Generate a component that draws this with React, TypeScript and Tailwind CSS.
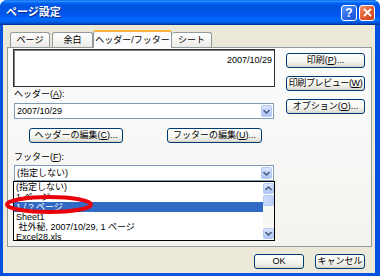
import React from 'react';

const font = "[font-family:'Liberation_Sans','Noto_Sans_CJK_JP',sans-serif]";

const Btn: React.FC<{ className?: string; children: React.ReactNode }> = ({ className = '', children }) => (
  <div
    className={`flex h-[15px] items-center justify-center rounded-[3px] border border-[#003c74] bg-[linear-gradient(180deg,#ffffff_0%,#f5f5f1_55%,#e6e5dd_85%,#d6d0c5_100%)] text-[9px] leading-none whitespace-nowrap text-black ${className}`}
  >
    {children}
  </div>
);

const Chevron: React.FC<{ up?: boolean }> = ({ up }) => (
  <svg width="7" height="5" viewBox="0 0 7 5">
    <polyline
      points={up ? '0.5,4 3.5,1 6.5,4' : '0.5,1 3.5,4 6.5,1'}
      fill="none"
      stroke="#4d6185"
      strokeWidth="1.6"
    />
  </svg>
);

const ArrowBtn: React.FC<{ up?: boolean; className?: string }> = ({ up, className = '' }) => (
  <div
    className={`flex w-[11px] items-center justify-center rounded-[2px] border border-[#b6c8f4] bg-[linear-gradient(180deg,#dbe5fc_0%,#c3d4fa_50%,#b1c6f5_100%)] ${className}`}
  >
    <Chevron up={up} />
  </div>
);

const Combo: React.FC<{ value: string }> = ({ value }) => (
  <div className="mx-px flex h-[16px] items-center border border-[#7f9db9] bg-white pl-[2px]">
    <span className="flex-1 text-[9px] leading-none whitespace-nowrap">{value}</span>
    <ArrowBtn className="mr-px h-[12px]" />
  </div>
);

const items = ['(指定しない)', '1 ページ', '1 / ? ページ', 'Sheet1', ' 社外秘, 2007/10/29, 1 ページ', 'Excel28.xls'];

export default function App() {
  return (
    <div className={`relative flex h-[276px] w-[380px] flex-col overflow-hidden rounded-t-[7px] bg-[#0551e0] ${font}`}>
      {/* Title bar */}
      <div className="flex h-[25px] flex-none items-center bg-[linear-gradient(180deg,#0058ee_0%,#3593ff_4%,#288eff_6%,#127dff_8%,#036ffc_10%,#0262ee_14%,#0057e5_20%,#0054e3_24%,#0055eb_56%,#005bf5_66%,#026afe_76%,#0062ef_86%,#0052d6_92%,#0040ab_96%,#003092_100%)] pr-[5px] pl-[6px]">
        <span className="text-[11px] font-bold text-white [text-shadow:1px_1px_0_#0c2a8a]">ページ設定</span>
        <div className="ml-auto flex gap-[2px]">
          <div className="flex h-[16px] w-[16px] items-center justify-center rounded-[3px] border border-white bg-[linear-gradient(135deg,#5b95f9_0%,#2763e6_60%,#1d55d8_100%)] text-[12px] leading-none font-bold text-white">
            ?
          </div>
          <div className="flex h-[16px] w-[16px] items-center justify-center rounded-[3px] border border-white bg-[linear-gradient(135deg,#f0906c_0%,#e2572c_55%,#c9431c_100%)]">
            <svg width="9" height="9" viewBox="0 0 9 9">
              <path d="M1 1L8 8M8 1L1 8" stroke="#fff" strokeWidth="1.8" />
            </svg>
          </div>
        </div>
      </div>

      {/* Client area */}
      <div className="mr-[5px] mb-[3px] ml-[3px] flex flex-1 flex-col bg-[#ece9d8] pt-[5px] pr-[3px] pl-[4px]">
        {/* Tabs */}
        <div className="flex h-[17px] items-end pl-[3px] text-[9px] leading-none">
          <div className="flex h-[15px] w-[40px] items-center justify-center rounded-t-[3px] border border-b-0 border-[#919b9c] bg-[linear-gradient(180deg,#ffffff,#ecebe6)]">
            ページ
          </div>
          <div className="ml-[2px] flex h-[15px] w-[41px] items-center justify-center rounded-t-[3px] border border-b-0 border-[#919b9c] bg-[linear-gradient(180deg,#ffffff,#ecebe6)]">
            余白
          </div>
          <div className="relative z-10 -mb-px flex h-[18px] w-[79px] items-center justify-center rounded-t-[3px] border-x border-t-2 border-x-[#919b9c] border-t-[#f5b53f] bg-[#fcfcfe]">
            ヘッダー/フッター
          </div>
          <div className="flex h-[15px] w-[40px] items-center justify-center rounded-t-[3px] border border-b-0 border-l-0 border-[#919b9c] bg-[linear-gradient(180deg,#ffffff,#ecebe6)]">
            シート
          </div>
        </div>

        {/* Panel */}
        <div className="flex h-[200px] flex-none gap-[11px] border border-[#919b9c] bg-[linear-gradient(180deg,#fcfcfe,#f4f3ee)] pt-[1px] pl-[5px]">
          <div className="flex w-[262px] flex-col">
            <div className="flex h-[38px] justify-end border border-[#2f2f2f] bg-white pt-[6px] pr-[2px] shadow-[inset_1px_1px_0_#808080]">
              <span className="text-[9px] leading-none">2007/10/29</span>
            </div>
            <span className="mt-[2px] pl-px text-[9px] leading-[10px]">
              ヘッダー(<u>A</u>):
            </span>
            <div className="mt-[4px]">
              <Combo value="2007/10/29" />
            </div>
            <div className="mt-[9px] flex gap-[44px] pl-[16px]">
              <Btn className="w-[94px]">
                ヘッダーの編集(<u>C</u>)...
              </Btn>
              <Btn className="w-[95px]">
                フッターの編集(<u>U</u>)...
              </Btn>
            </div>
            <span className="mt-[9px] pl-px text-[9px] leading-[10px]">
              フッター(<u>F</u>):
            </span>
            <div className="relative mt-[3px]">
              <Combo value="(指定しない)" />
              {/* Open dropdown list */}
              <div className="absolute top-full left-0 z-20 flex h-[60px] w-[262px] border border-black bg-white">
                <div className="flex flex-1 flex-col">
                  {items.map((it, i) => (
                    <div
                      key={i}
                      className={`h-[10px] pl-[2px] text-[9px] leading-[10px] whitespace-pre ${i === 2 ? 'bg-[#316ac5] text-white' : 'text-black'}`}
                    >
                      {it}
                    </div>
                  ))}
                </div>
                <div className="flex w-[11px] flex-col bg-[#f7f7f3] py-px">
                  <ArrowBtn up className="h-[11px]" />
                  <div className="mt-px h-[11px] w-[11px] rounded-[2px] border border-[#b6c8f4] bg-[linear-gradient(90deg,#cbdafc,#bccffa)]" />
                  <div className="flex-1" />
                  <ArrowBtn className="h-[11px]" />
                </div>
              </div>
            </div>
          </div>

          <div className="flex w-[79px] flex-col gap-[8px] pt-[4px]">
            <Btn>
              印刷(<u>P</u>)...
            </Btn>
            <Btn className="text-[8.5px] tracking-[-0.4px]">
              印刷プレビュー(<u>W</u>)
            </Btn>
            <Btn>
              オプション(<u>O</u>)...
            </Btn>
          </div>
        </div>

        {/* Bottom buttons */}
        <div className="mt-[7px] flex justify-end gap-[11px] pr-[7px]">
          <Btn className="w-[50px]">OK</Btn>
          <Btn className="w-[50px]">キャンセル</Btn>
        </div>
      </div>

      {/* Red highlight ellipse */}
      <svg className="pointer-events-none absolute top-0 left-0 z-30" width="380" height="276" viewBox="0 0 380 276">
        <ellipse cx="49" cy="204.5" rx="42" ry="7.5" fill="none" stroke="#e8000b" strokeWidth="4" />
      </svg>
    </div>
  );
}
